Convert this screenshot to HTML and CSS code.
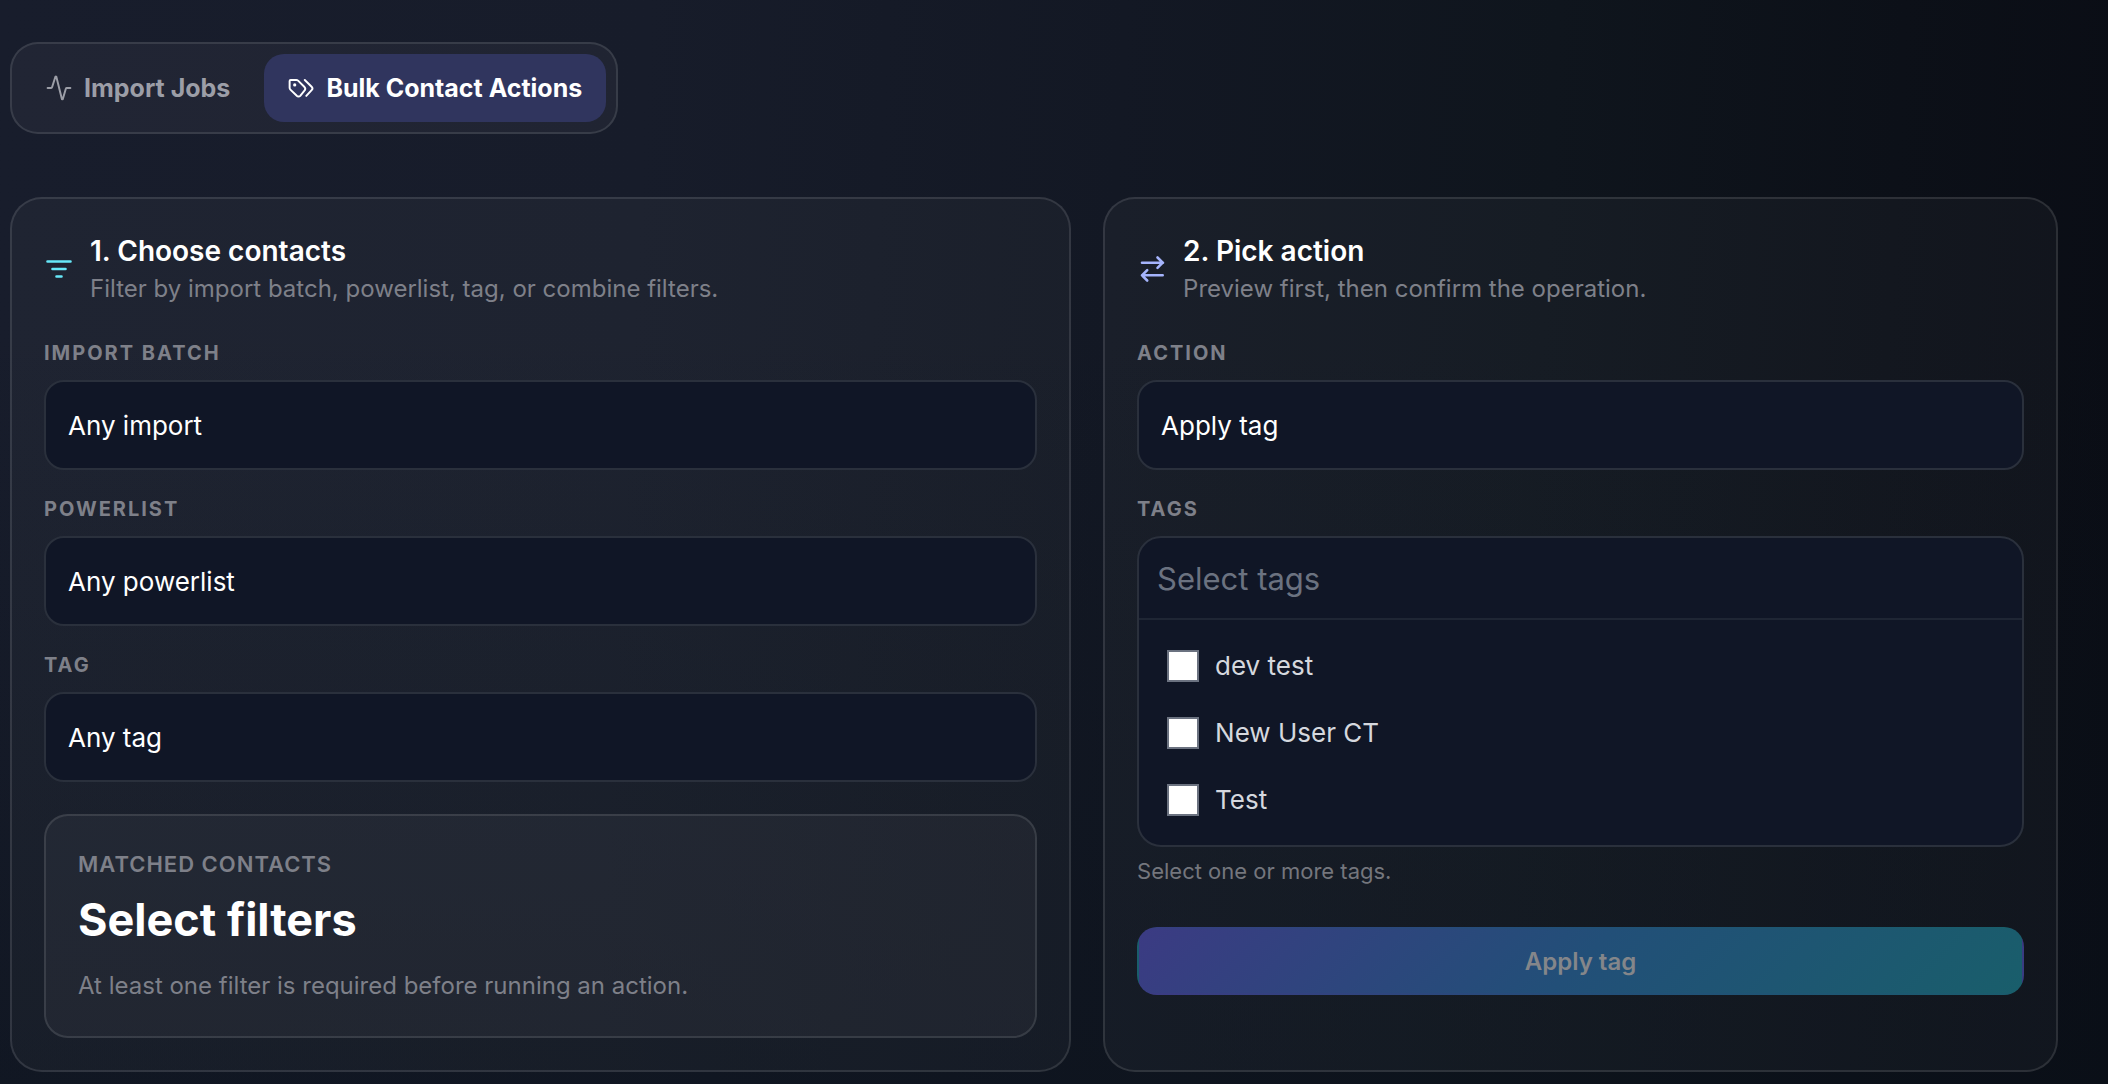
FILE: index.html
```html
<!DOCTYPE html>
<html lang="en">
<head>
<meta charset="utf-8">
<meta name="viewport" content="width=device-width, initial-scale=1">
<title>Bulk Contact Actions</title>
<link rel="stylesheet" href="styles.css">
</head>
<body>
<main class="page">
  <nav class="tabs" aria-label="Sections">
    <button class="tab" type="button">
      <svg class="tab-icon" viewBox="0 0 24 24" aria-hidden="true"><path d="M1.500 12h3.200a1 1 0 0 0 .9-.7L8.600 1.800a.5.5 0 0 1 1 0l5 20.200a.5.5 0 0 0 1 0l2.700-9.300a1 1 0 0 1 1-.7h3.200"/></svg>
      Import Jobs
    </button>
    <button class="tab tab-active" type="button">
      <svg class="tab-icon" viewBox="0 0 24 24" aria-hidden="true"><path d="M1.500 5.600v6.200a2.400 2.400 0 0 0 .7 1.700l5.900 5.700a2.200 2.200 0 0 0 3.200 0l3.700-4.500a2.800 2.800 0 0 0 0-3.900L9.300 5.200a2.400 2.400 0 0 0-1.700-.6H2.500a1 1 0 0 0-1 1zM15.500 4.600l6.300 6.200a2.300 2.300 0 0 1 0 3.200l-4.900 5.300"/><circle class="dot" cx="6.200" cy="9.200" r="1.500"/></svg>
      Bulk Contact Actions
    </button>
  </nav>

  <div class="columns">
    <section class="card">
      <header class="card-head">
        <svg class="head-icon icon-filter" viewBox="0 0 30 30" aria-hidden="true"><path d="M3.500 7.500h23M8.500 15h13M12.500 22.500h5"/></svg>
        <div>
          <h2 class="title">1. Choose contacts</h2>
          <p class="subtitle">Filter by import batch, powerlist, tag, or combine filters.</p>
        </div>
      </header>
      <div class="field">
        <label class="label" for="batch">Import batch</label>
        <select class="select" id="batch"><option>Any import</option></select>
      </div>
      <div class="field">
        <label class="label" for="powerlist">Powerlist</label>
        <select class="select" id="powerlist"><option>Any powerlist</option></select>
      </div>
      <div class="field">
        <label class="label" for="tag">Tag</label>
        <select class="select" id="tag"><option>Any tag</option></select>
      </div>
      <div class="summary">
        <p class="summary-label">Matched contacts</p>
        <p class="summary-value">Select filters</p>
        <p class="summary-note">At least one filter is required before running an action.</p>
      </div>
    </section>

    <section class="card">
      <header class="card-head">
        <svg class="head-icon icon-swap" viewBox="0 0 30 30" aria-hidden="true"><path d="M5 8.700h21M20.500 3.500l5.200 5.200-5.200 5.200M25.700 21.300H5M10.200 16.100L5 21.300l5.200 5.200"/></svg>
        <div>
          <h2 class="title">2. Pick action</h2>
          <p class="subtitle">Preview first, then confirm the operation.</p>
        </div>
      </header>
      <div class="field">
        <label class="label" for="action">Action</label>
        <select class="select" id="action"><option>Apply tag</option></select>
      </div>
      <div class="field">
        <label class="label" for="tags">Tags</label>
        <div class="picker">
          <input class="picker-search" id="tags" type="text" placeholder="Select tags">
          <div class="picker-list">
            <label class="option"><input class="check" type="checkbox">dev test</label>
            <label class="option"><input class="check" type="checkbox">New User CT</label>
            <label class="option"><input class="check" type="checkbox">Test</label>
          </div>
        </div>
        <p class="hint">Select one or more tags.</p>
      </div>
      <button class="submit" type="button" disabled>Apply tag</button>
    </section>
  </div>
</main>
</body>
</html>
```
FILE: styles.css
```css
* {
  box-sizing: border-box;
}

body {
  margin: 0;
  min-height: 100vh;
  font-family: Inter, "Liberation Sans", sans-serif;
  color: #fff;
  background:
    linear-gradient(180deg, rgba(10, 17, 26, 0) 30%, rgba(10, 17, 26, 0.5) 100%),
    linear-gradient(93deg, #181d2c 0%, #171c2a 30%, #131824 52%, #0f151d 72%, #0c1018 88%, #0a0d15 100%);
}

h2,
p {
  margin: 0;
}

button,
input,
select {
  font-family: inherit;
}

.page {
  padding: 42px 50px 8px 10px;
}

.tabs {
  display: flex;
  width: fit-content;
  gap: 10px;
  padding: 10px;
  border: 2px solid rgba(255, 255, 255, 0.11);
  border-radius: 28px;
  background: rgba(255, 255, 255, 0.04);
}

.tab {
  display: flex;
  align-items: center;
  gap: 12px;
  height: 68px;
  padding: 0 24px;
  border: 0;
  border-radius: 20px;
  background: none;
  color: #9c9ea7;
  font-size: 25px;
  font-weight: 700;
}

.tab-active {
  background: #30355e;
  color: #fff;
}

.tab-icon {
  width: 26px;
  height: 26px;
  fill: none;
  stroke: currentColor;
  stroke-width: 1.8;
  stroke-linecap: round;
  stroke-linejoin: round;
}

.dot {
  fill: currentColor;
  stroke: none;
}

.columns {
  display: grid;
  grid-template-columns: 10fr 9fr;
  gap: 32px;
  margin-top: 63px;
}

.card {
  padding: 32px;
  border: 2px solid rgba(255, 255, 255, 0.11);
  border-radius: 32px;
  background: rgba(255, 245, 245, 0.03);
}

.card-head {
  display: flex;
  align-items: center;
  gap: 16px;
  margin-bottom: 31px;
}

.head-icon {
  width: 30px;
  height: 30px;
  fill: none;
  stroke-width: 2.6;
  stroke-linecap: round;
  stroke-linejoin: round;
}

.icon-filter {
  stroke: #67e8f9;
}

.icon-swap {
  stroke: #a5b4fc;
}

.title {
  font-size: 28px;
  line-height: 40px;
  font-weight: 600;
}

.subtitle {
  font-size: 24px;
  line-height: 36px;
  color: #7e8089;
}

.field {
  margin-bottom: 24px;
}

.label {
  display: block;
  margin-bottom: 12px;
  font-size: 20px;
  line-height: 30px;
  font-weight: 700;
  letter-spacing: 2px;
  text-transform: uppercase;
  color: #7e8089;
}

.select {
  display: block;
  appearance: none;
  width: 100%;
  height: 90px;
  padding: 0 22px;
  border: 2px solid #2a303c;
  border-radius: 20px;
  background: #101626;
  color: #fff;
  font-size: 26px;
}

.summary {
  margin-top: 32px;
  padding: 32px;
  border: 2px solid rgba(255, 255, 255, 0.11);
  border-radius: 24px;
  background: rgba(255, 255, 255, 0.04);
}

.summary-label {
  font-size: 22px;
  line-height: 32px;
  font-weight: 600;
  letter-spacing: 1px;
  text-transform: uppercase;
  color: #7e8089;
}

.summary-value {
  margin: 8px 0 16px;
  font-size: 45px;
  line-height: 64px;
  font-weight: 700;
}

.summary-note {
  font-size: 24px;
  line-height: 36px;
  color: #7e8089;
}

.picker {
  border: 2px solid #2a303c;
  border-radius: 24px;
  background: #101626;
  overflow: hidden;
}

.picker-search {
  display: block;
  width: 100%;
  height: 82px;
  padding: 0 18px;
  border: 0;
  border-bottom: 2px solid #1f2634;
  background: none;
  color: #fff;
  font-size: 31px;
}

.picker-search::placeholder {
  color: #6b7280;
}

.picker-list {
  padding: 12px 28px;
}

.option {
  display: flex;
  align-items: center;
  gap: 16px;
  height: 67px;
  font-size: 26px;
  color: #d5d8de;
}

.check {
  appearance: none;
  width: 32px;
  height: 32px;
  margin: 0;
  border: 2px solid #6b7280;
  background: #fff;
}

.hint {
  margin-top: 8px;
  font-size: 22px;
  line-height: 32px;
  color: #74767d;
}

.submit {
  display: block;
  width: 100%;
  height: 68px;
  margin-top: 40px;
  border: 2px solid transparent;
  border-radius: 20px;
  background: linear-gradient(135deg, #3b3b83 0%, #224f78 50%, #195e6b 100%);
  color: #84868a;
  font-size: 24px;
  font-weight: 600;
}
```
